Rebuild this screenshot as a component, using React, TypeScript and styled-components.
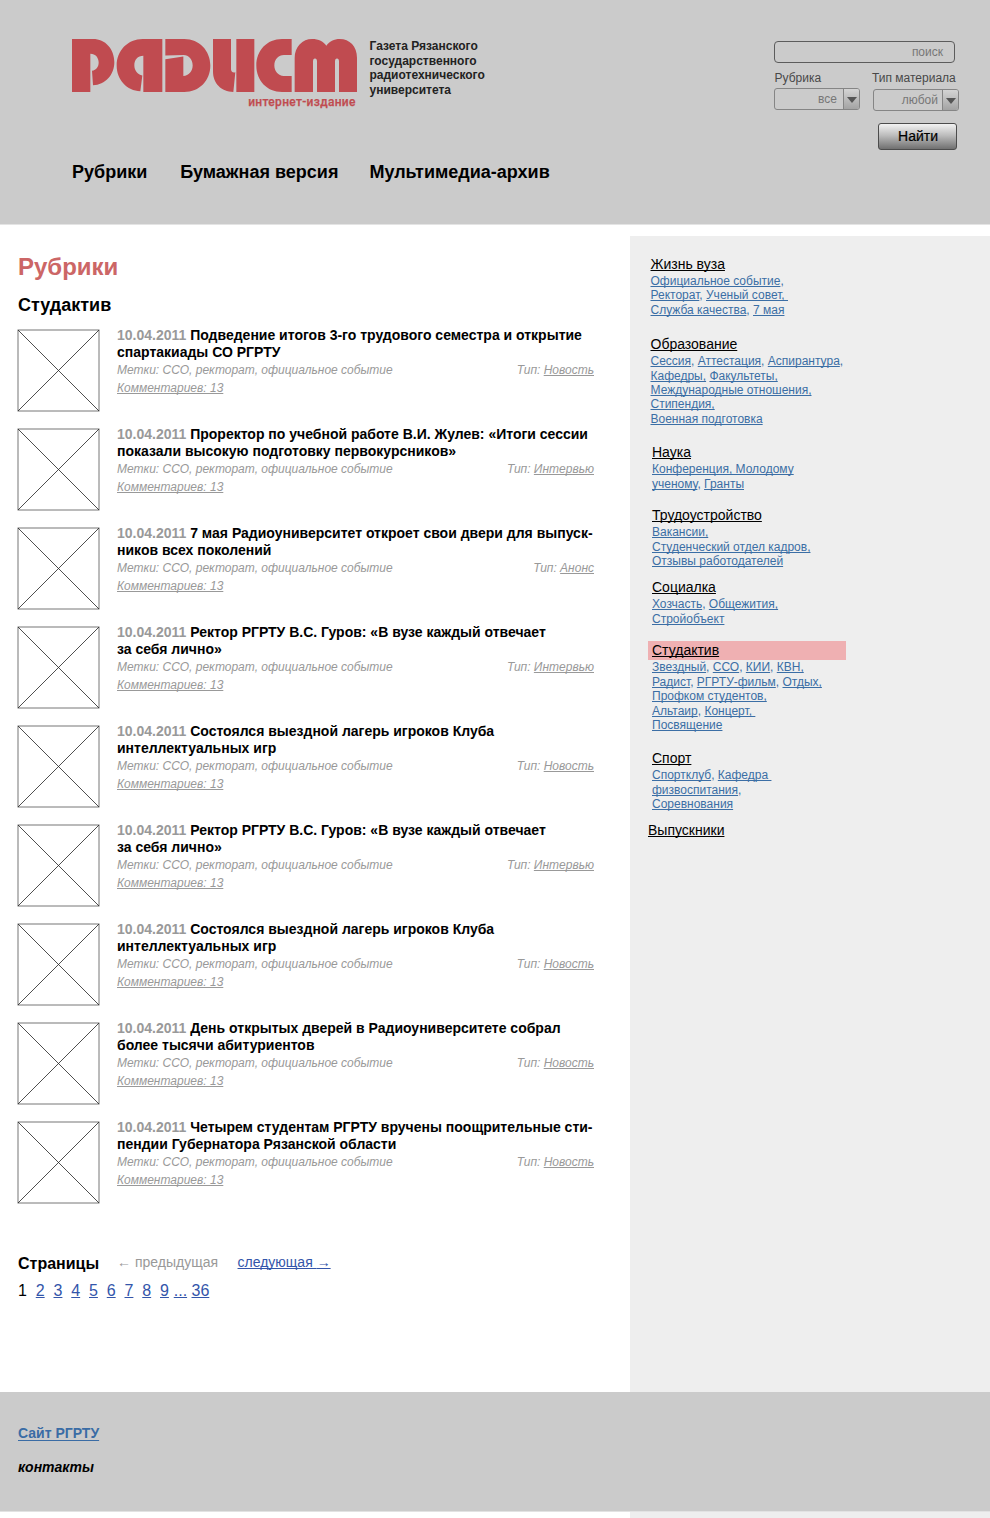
import React from "react";
import styled, { createGlobalStyle } from "styled-components";

const Global = createGlobalStyle`
  * { box-sizing: border-box; }
  body { margin: 0; background: #fff; color: #000; font-family: "Liberation Sans", Arial, sans-serif; }
  h1, h2, h3, p { margin: 0; font-weight: inherit; font-size: inherit; }
  a { color: inherit; text-decoration: underline; text-decoration-thickness: 1px; text-underline-offset: 1px; text-decoration-skip-ink: none; }
`;

const Page = styled.div`width: 990px; height: 1518px; display: flex; flex-direction: column; overflow: hidden;`;

const Header = styled.header`
  height: 225px; background: #cbcbcb; border-bottom: 1px solid #e4e4e4;
  padding: 39px 31px 0 72px; display: flex; justify-content: space-between;
`;
const Brand = styled.div`display: flex; align-items: flex-start; height: 121px;`;
const LogoBox = styled.div`
  width: 285px; margin-right: 12.5px; display: flex; flex-direction: column; align-items: flex-end;
  svg { display: block; width: 285px; height: 53px; }
`;
const Edition = styled.span`
  font: 500 12px/16px Roboto, sans-serif; color: #c04b50; margin: 2px 1.3px 0 0; white-space: nowrap;
  letter-spacing: 0.3px; -webkit-text-stroke: 0.25px #c04b50;
`;
const Tagline = styled.p`font-size: 12px; font-weight: bold; line-height: 14.4px; color: #222; padding-top: 0.4px; white-space: nowrap;`;
const Nav = styled.nav`
  display: flex; gap: 33px; font-size: 18px; font-weight: bold; line-height: 24px; white-space: nowrap;
  > :last-child { margin-left: -2px; }
`;

const Search = styled.form`width: 185px; margin-top: 2px; color: #484848; font-size: 12px;`;
const Query = styled.div`
  width: 181px; height: 22px; border: 1px solid #5c5c5c; border-radius: 4px; padding-right: 11px;
  line-height: 20px; text-align: right; color: #777;
`;
const Filters = styled.div`display: flex; justify-content: space-between; margin-top: 7px; height: 50px;`;
const Filter = styled.div<{ $drop?: number }>`
  width: 86px; line-height: 16px; white-space: nowrap;
  span { display: block; height: 16px; margin: 0 -2px 0 ${p => (p.$drop ? -1 : 0.5)}px; }
  > div { margin-top: ${p => 2 + (p.$drop || 0)}px; }
  p { padding-right: ${p => (p.$drop ? 4 : 6)}px; }
`;
const Select = styled.div`
  display: flex; height: 22px; border: 1px solid #858585; border-radius: 3px; overflow: hidden; color: #777;
  p { flex: 1; text-align: right; line-height: 20px; }
  i { width: 16px; border-left: 1px solid #858585; background: linear-gradient(#d4d4d4, #a3a3a3); display: grid; place-items: center; }
  i::after { content: ""; margin-top: 2px; border: 5.5px solid transparent; border-top: 6px solid #555; border-bottom: 0; }
`;
const Submit = styled.button`
  display: block; width: 79px; height: 27px; margin: 3px 0 0 104px; padding: 0 0 1px 1px;
  border: 1px solid #4c4c4c; border-radius: 3px; background: linear-gradient(#f2f2f2, #bdbdbd 45%, #707070);
  font: 14px/24px "Liberation Sans", Arial, sans-serif; color: #000; -webkit-text-stroke: 0.2px #000;
`;

const Middle = styled.div`height: 1167px; display: flex; flex: none;`;
const Content = styled.main`width: 630px; padding: 28px 36px 0 17px;`;
const Title = styled.h1`font-size: 24px; font-weight: bold; line-height: 28px; color: #cc6666; padding-left: 1px;`;
const Subtitle = styled.h2`font-size: 18px; font-weight: bold; line-height: 22px; margin: 13px 0 13px; padding-left: 1px;`;

const Item = styled.article`display: flex; height: 99px; gap: 17px;`;
const Thumb = styled.svg`width: 83px; height: 83px; flex: none; display: block;`;
const ItemBody = styled.div`flex: 1; white-space: nowrap;`;
const ItemTitle = styled.h3`
  font-size: 14px; font-weight: bold; line-height: 17px; margin-top: -2px; height: 34px;
  time { color: #999; }
`;
const Meta = styled.div`
  display: flex; justify-content: space-between; font-size: 12px; font-style: italic; line-height: 18px; color: #999;
`;

const Pager = styled.div`margin: 32px 0 0 1px; white-space: nowrap;`;
const PagerTop = styled.div`
  display: flex; align-items: baseline; line-height: 24px; font-size: 14px; color: #999;
  strong { font-size: 16px; color: #000; width: 99px; }
  span, a { position: relative; top: -2px; }
  a { color: #3355aa; margin-left: 19.5px; }
`;
const Arrow = styled.i`font-family: "Liberation Serif", serif; font-style: normal;`;
const Pages = styled.div`
  display: flex; font-size: 16px; line-height: 24px; margin-top: 2px; color: #3355aa;
  > * { width: 17.75px; }
  b { font-weight: normal; color: #000; }
  > :nth-last-child(2) { margin-left: -4px; }
`;

const Sidebar = styled.aside`width: 360px; margin-top: 11px; background: #eee; padding: 19px 0 0 18px; white-space: pre;`;
const Group = styled.section<{ $after: number; $x: number }>`margin-bottom: ${p => p.$after}px; padding-left: ${p => p.$x}px;`;
const GroupTitle = styled.h3<{ $active?: boolean }>`
  font-size: 14px; line-height: 19px; height: 19px;
  ${p => p.$active && "background: #efb0b2; width: 198px; margin-left: -4px; padding-left: 4px;"}
`;
const Links = styled.p`font-size: 12px; line-height: 14.4px; color: #3b6ea5; margin-top: -0.1px; padding-bottom: 0.7px;`;

const Footer = styled.footer`
  height: 120px; flex: none; background: #cbcbcb; border-bottom: 1px solid #e2e2e2; padding: 31px 18px 0;
  font-size: 14px; font-weight: bold; line-height: 20px;
  a { color: #3a6ca5; display: block; width: max-content; text-underline-offset: 2px; }
  em { display: block; margin-top: 14px; }
`;
const Below = styled.div`flex: 1; margin-left: 630px; background: #eee;`;

const logoShapes = [
  "M35 28H98C135 28 162 58 162 97C162 135 135 163 98 166L95 123C108 121 115 110 115 98C115 84 106 72 90 72V186H35Z",
  "M306 28V186H249V78C232 78 222 90 222 106C222 122 232 133 246 137L240 184C200 182 169 150 169 107C169 62 203 28 247 28Z",
  "M315 28H372C417 28 450 63 450 107C450 152 417 186 372 186H315V88L369 80V138C385 138 397 124 397 107C397 88 385 77 370 76L315 77Z",
  "M458 28H512V119C513 126 518 129 525 127L519 186C483 186 458 160 458 126ZM528 28H582V186H528Z",
  "M694 28H665C620 28 588 62 588 107C588 152 620 186 665 186H694V138H670C654 138 642 124 642 107C642 89 654 76 671 76H694Z",
  "M703 186V85C703 50 727 28 755 28C775 28 790 36 798 48C806 36 822 28 838 28C868 28 890 50 890 84V186H836V95C836 89 834 86 830 86C826 86 824 89 824 95V186H770V95C770 89 768 86 764 86C760 86 758 89 758 95V186Z",
];

const news: [string, string, string][] = [
  ["Подведение итогов 3-го трудового семестра и открытие", "спартакиады СО РГРТУ", "Новость"],
  ["Проректор по учебной работе В.И. Жулев: «Итоги сессии", "показали высокую подготовку первокурсников»", "Интервью"],
  ["7 мая Радиоуниверситет откроет свои двери для выпуск-", "ников всех поколений", "Анонс"],
  ["Ректор РГРТУ В.С. Гуров: «В вузе каждый отвечает", "за себя лично»", "Интервью"],
  ["Состоялся выездной лагерь игроков Клуба", "интеллектуальных игр", "Новость"],
  ["Ректор РГРТУ В.С. Гуров: «В вузе каждый отвечает", "за себя лично»", "Интервью"],
  ["Состоялся выездной лагерь игроков Клуба", "интеллектуальных игр", "Новость"],
  ["День открытых дверей в Радиоуниверситете собрал", "более тысячи абитуриентов", "Новость"],
  ["Четырем студентам РГРТУ вручены поощрительные сти-", "пендии Губернатора Рязанской области", "Новость"],
];

// Square brackets mark the linked part of each line.
const groups = [
  { name: "Жизнь вуза", x: 2.5, after: 17.4, lines: ["[Официальное событие],", "[Ректорат], [Ученый совет, ]", "[Служба качества], [7 мая]"] },
  { name: "Образование", x: 2.5, after: 16.6, lines: ["[Сессия], [Аттестация], [Аспирантура],", "[Кафедры,] [Факультеты,]", "[Международные отношения,]", "[Стипендия,]", "[Военная подготовка]"] },
  { name: "Наука", x: 4, after: 14.6, lines: ["[Конференция, Молодому]", "[ученому], [Гранты]"] },
  { name: "Трудоустройство", x: 4, after: 9.2, lines: ["[Вакансии,]", "[Студенческий отдел кадров,]", "[Отзывы работодателей]"] },
  { name: "Социалка", x: 4, after: 14.6, lines: ["[Хозчасть], [Общежития,]", "[Стройобъект]"] },
  { name: "Студактив", x: 4, after: 16.4, active: true, lines: ["[Звездный], [ССО], [КИИ], [КВН,]", "[Радист], [РГРТУ-фильм], [Отдых,]", "[Профком студентов,]", "[Альтаир], [Концерт, ]", "[Посвящение]"] },
  { name: "Спорт", x: 4, after: 9.2, lines: ["[Спортклуб], [Кафедра ]", "[физвоспитания],", "[Соревнования]"] },
  { name: "Выпускники", x: 0, after: 0, lines: [] },
];

const linked = (line: string) =>
  line.split(/(\[[^\]]+\])/).map((t, i) => (t[0] === "[" ? <a key={i}>{t.slice(1, -1)}</a> : t));

export default function App() {
  return (
    <Page>
      <Global />
      <Header>
        <div>
          <Brand>
            <LogoBox>
              <svg viewBox="35 28 855 158" preserveAspectRatio="none" fill="#c04b50">
                {logoShapes.map(d => <path key={d} d={d} />)}
              </svg>
              <Edition>интернет-издание</Edition>
            </LogoBox>
            <Tagline>Газета Рязанского<br />государственного<br />радиотехнического<br />университета</Tagline>
          </Brand>
          <Nav><span>Рубрики</span><span>Бумажная версия</span><span>Мультимедиа-архив</span></Nav>
        </div>
        <Search>
          <Query>поиск</Query>
          <Filters>
            <Filter><span>Рубрика</span><Select><p>все</p><i /></Select></Filter>
            <Filter $drop={1}><span>Тип материала</span><Select><p>любой</p><i /></Select></Filter>
          </Filters>
          <Submit type="button">Найти</Submit>
        </Search>
      </Header>
      <Middle>
        <Content>
          <Title>Рубрики</Title>
          <Subtitle>Студактив</Subtitle>
          {news.map(([first, second, kind], i) => (
            <Item key={i}>
              <Thumb viewBox="0 0 83 83" fill="none">
                <rect x="1" y="1" width="81" height="81" stroke="#777" strokeWidth="1" />
                <path d="M1 1L82 82M82 1L1 82" stroke="#222" strokeWidth="0.8" />
              </Thumb>
              <ItemBody>
                <ItemTitle><time>10.04.2011</time> {first}<br />{second}</ItemTitle>
                <Meta><span>Метки: ССО, ректорат, официальное событие</span><span>Тип: <a>{kind}</a></span></Meta>
                <Meta><a>Комментариев: 13</a></Meta>
              </ItemBody>
            </Item>
          ))}
          <Pager>
            <PagerTop>
              <strong>Страницы</strong>
              <span><Arrow>←</Arrow> предыдущая</span>
              <a>следующая <Arrow>→</Arrow></a>
            </PagerTop>
            <Pages>
              <b>1</b>
              {["2", "3", "4", "5", "6", "7", "8", "9", "...", "36"].map(n => <span key={n}><a>{n}</a></span>)}
            </Pages>
          </Pager>
        </Content>
        <Sidebar>
          {groups.map(g => (
            <Group key={g.name} $after={g.after} $x={g.x}>
              <GroupTitle $active={g.active}><a>{g.name}</a></GroupTitle>
              {g.lines.length > 0 && (
                <Links>{g.lines.map((l, i) => <React.Fragment key={i}>{i > 0 && <br />}{linked(l)}</React.Fragment>)}</Links>
              )}
            </Group>
          ))}
        </Sidebar>
      </Middle>
      <Footer><a>Сайт РГРТУ</a><em>контакты</em></Footer>
      <Below />
    </Page>
  );
}
